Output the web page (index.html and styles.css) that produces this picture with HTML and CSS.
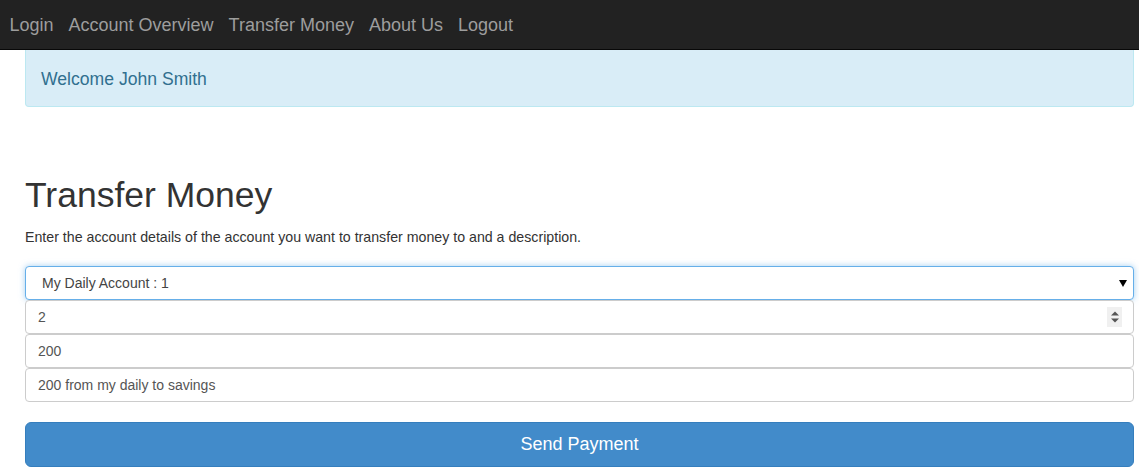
FILE: index.html
```html
<!DOCTYPE html>
<html>
<head>
<meta charset="utf-8">
<link rel="stylesheet" href="styles.css">
</head>
<body>
<nav class="navbar">
  <a class="nav-link" href="#">Login</a>
  <a class="nav-link" href="#">Account Overview</a>
  <a class="nav-link" href="#">Transfer Money</a>
  <a class="nav-link" href="#">About Us</a>
  <a class="nav-link" href="#">Logout</a>
</nav>
<main class="container">
  <div class="alert">Welcome John Smith</div>
  <h1 class="title">Transfer Money</h1>
  <p class="lead">Enter the account details of the account you want to transfer money to and a description.</p>
  <form class="form">
    <div class="field select-field">
      <span class="field-text">My Daily Account : 1</span>
      <svg class="caret" width="8" height="7" viewBox="0 0 8 7"><path d="M0 0H8L4 7Z" fill="#000"/></svg>
    </div>
    <div class="field">
      <span class="field-text">2</span>
      <span class="spinner">
        <svg width="10" height="16" viewBox="0 0 10 16"><path d="M1 6.5L5 2.5L9 6.5Z" fill="#555"/><path d="M1 9.5L9 9.5L5 13.5Z" fill="#555"/></svg>
      </span>
    </div>
    <div class="field"><span class="field-text">200</span></div>
    <div class="field"><span class="field-text">200 from my daily to savings</span></div>
    <button class="btn" type="button">Send Payment</button>
  </form>
</main>
</body>
</html>
```
FILE: styles.css
```css
html, body {
  margin: 0;
  padding: 0;
  background: #fff;
  font-family: "Liberation Sans", Arial, sans-serif;
  color: #333;
}
.navbar {
  height: 50px;
  background: #222;
  border-bottom: 1px solid #080808;
  box-sizing: border-box;
  display: flex;
  align-items: center;
  padding: 0 2px;
}
.nav-link {
  color: #9d9d9d;
  text-decoration: none;
  font-size: 18px;
  padding: 0 7.5px;
  line-height: 20px;
}
.container {
  padding: 0 5px 0 25px;
}
.alert {
  background: #d9edf7;
  border: 1px solid #bce8f1;
  border-top: none;
  border-radius: 0 0 4px 4px;
  color: #31708f;
  font-size: 17.6px;
  height: 57px;
  box-sizing: border-box;
  padding: 2px 15px 0;
  display: flex;
  align-items: center;
}
.title {
  font-size: 35.5px;
  font-weight: normal;
  margin: 68px 0 0;
  line-height: 40px;
  color: #333;
}
.lead {
  font-size: 14.2px;
  margin: 13px 0 0;
  line-height: 18px;
  color: #333;
}
.form {
  margin-top: 20px;
  display: flex;
  flex-direction: column;
}
.field {
  height: 34px;
  box-sizing: border-box;
  border: 1px solid #ccc;
  border-radius: 4px;
  display: flex;
  align-items: center;
  padding: 0 12px;
  font-size: 14px;
  color: #555;
  background: #fff;
}
.select-field {
  border-color: #66afe9;
  box-shadow: 0 0 6px rgba(102,175,233,.6);
  padding-left: 16px;
  padding-right: 6px;
  color: #444;
}
.field-text { flex: 1; }
.caret { display: block; }
.spinner {
  width: 15px;
  height: 20px;
  background: #f0f0f0;
  display: flex;
  align-items: center;
  justify-content: center;
  margin-right: -1px;
}
.btn {
  margin-top: 20px;
  height: 45px;
  border: 1px solid #357ebd;
  border-radius: 6px;
  background: #428bca;
  color: #fff;
  font-family: "Liberation Sans", Arial, sans-serif;
  font-size: 18px;
  padding: 0;
}
```
